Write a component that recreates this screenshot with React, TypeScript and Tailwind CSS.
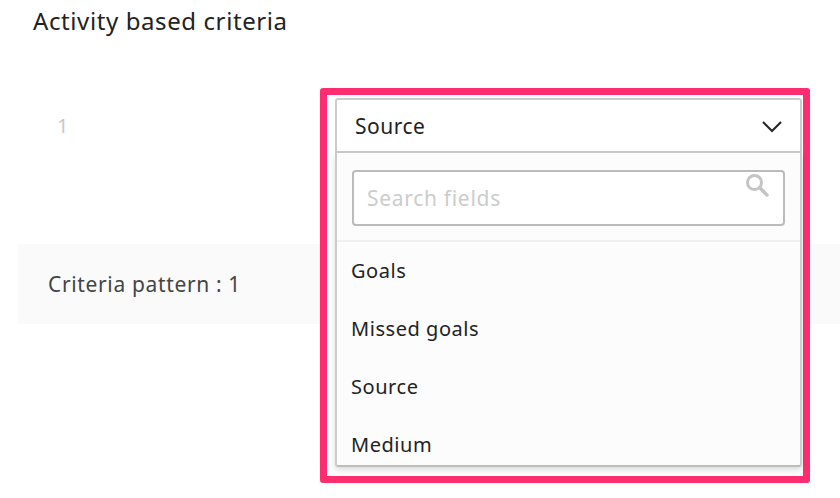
const fontStack = "font-['Noto_Sans','Open_Sans',sans-serif]"

const fields = ["Goals", "Missed goals", "Source", "Medium"]

const App = () => {
    return (
        <div className={`relative h-[498px] w-[840px] overflow-hidden bg-white ${fontStack}`}>
            <h1 className="pl-[33px] pt-[5px] text-[24px] leading-[32px] tracking-[0.6px] text-[#222222]">Activity based criteria</h1>
            <p className="mt-[75px] pl-[57px] text-[20px] leading-[28px] text-[#c8c8c8]">1</p>
            <div className="ml-[18px] mt-[104px] flex h-[80px] items-center bg-[#fafafa] pl-[30px] pt-[2px]">
                <span className="text-[21px] tracking-[0.65px] text-[#444444]">Criteria pattern : 1</span>
            </div>

            {/* highlight box drawn over the page */}
            <div className="absolute left-[320px] top-[88px] h-[395px] w-[490px] rounded-[3px] border-[7px] border-[#ff2d6f] bg-white pl-[8px] pt-[3px]">
                <div className="flex h-[55px] w-[467px] items-center justify-between rounded-t-[3px] border-2 border-[#cccccc] bg-white pl-[18px] pr-[17px] pt-[2px]">
                    <span className="text-[21px] tracking-[0.5px] text-[#222222]">Source</span>
                    <svg width="22" height="13" viewBox="0 0 22 13" fill="none" stroke="#2a2a2a" strokeWidth="2.2">
                        <path d="M2 2 L11 11 L20 2" />
                    </svg>
                </div>
                <div className="h-[314px] w-[467px] rounded-b-[3px] border-2 border-t-0 border-[#bdbdbd] border-x-[#cccccc] bg-[#fcfcfc] shadow-[0_3px_6px_rgba(0,0,0,0.15)]">
                    <div className="border-b-2 border-[#f0f0f0] px-[15px] pb-[14px] pt-[17px]">
                        <div className="relative flex h-[56px] items-center rounded-[4px] border-2 border-[#bbbbbb] bg-white pl-[13px] pt-[2px]">
                            <span className="text-[21px] tracking-[0.7px] text-[#cccccc]">Search fields</span>
                            <svg className="absolute right-[13px] top-[0px]" width="26" height="26" viewBox="0 0 26 26" fill="none" stroke="#c4c4c4">
                                <circle cx="10.5" cy="10.5" r="7" strokeWidth="3" />
                                <path d="M15.5 15.5 L23 23" strokeWidth="3.4" strokeLinecap="round" />
                            </svg>
                        </div>
                    </div>
                    <div>
                        {fields.map((field) => (
                            <div key={field} className="flex h-[58px] items-center pl-[14px] text-[20px] tracking-[0.55px] text-[#222222]">
                                {field}
                            </div>
                        ))}
                    </div>
                </div>
            </div>
        </div>
    )
}

export default App
